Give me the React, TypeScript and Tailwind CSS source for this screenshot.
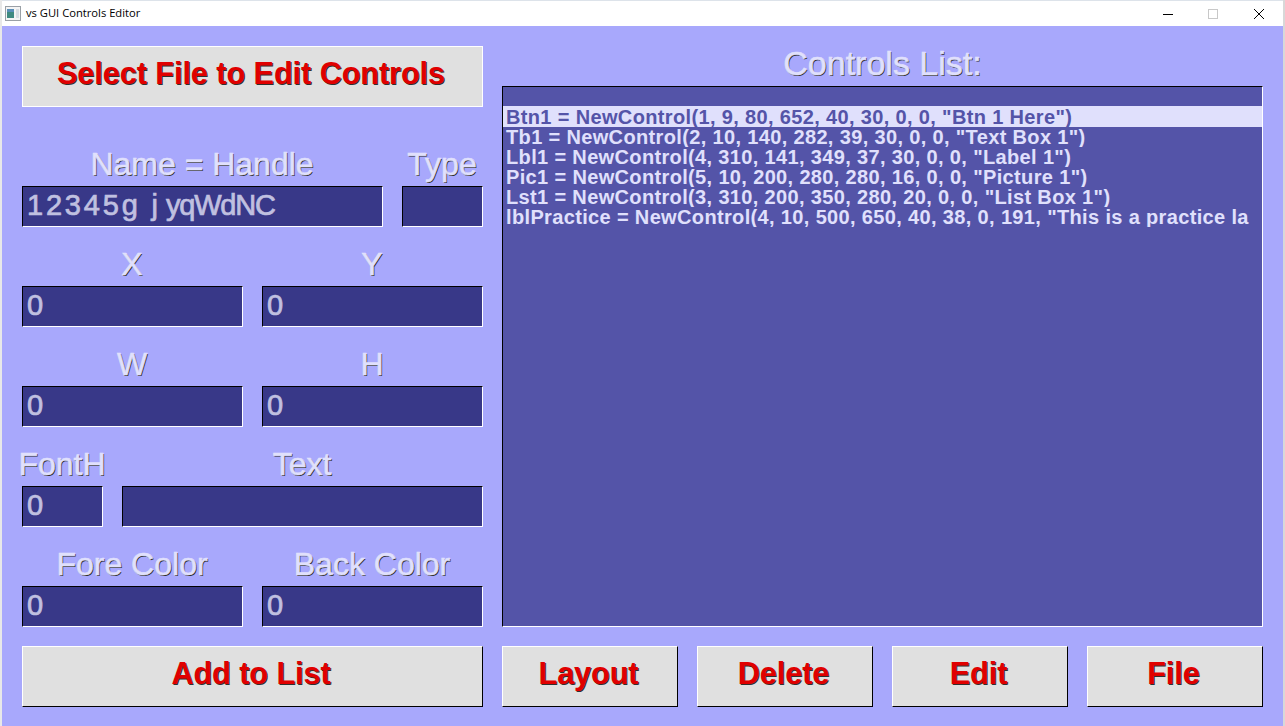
import type { ReactNode } from "react";

const font = "font-['Liberation_Sans',Arial,sans-serif]";

const controls = [
  'Btn1 = NewControl(1, 9, 80, 652, 40, 30, 0, 0, "Btn 1 Here")',
  'Tb1 = NewControl(2, 10, 140, 282, 39, 30, 0, 0, "Text Box 1")',
  'Lbl1 = NewControl(4, 310, 141, 349, 37, 30, 0, 0, "Label 1")',
  'Pic1 = NewControl(5, 10, 200, 280, 280, 16, 0, 0, "Picture 1")',
  'Lst1 = NewControl(3, 310, 200, 350, 280, 20, 0, 0, "List Box 1")',
  'lblPractice = NewControl(4, 10, 500, 650, 40, 38, 0, 191, "This is a practice la',
];

function Field({ label, value, className }: { label: string; value?: ReactNode; className: string }) {
  return (
    <div className={`flex h-full flex-col justify-end ${className}`}>
      <div className="mb-[6px] flex justify-center whitespace-nowrap pr-[1px] text-[32px] leading-[32px] text-[#e0e0fc] [-webkit-text-stroke:0.6px_#e0e0fc] [text-shadow:1px_1px_0_#303030]">
        {label}
      </div>
      <div className="h-[41px] overflow-hidden whitespace-nowrap border border-t-black border-l-black border-r-white border-b-white bg-[#383888] pl-[4px] text-[29px] leading-[36px] text-[#c0c0e0] [-webkit-text-stroke:0.7px_#c0c0e0]">
        {value}
      </div>
    </div>
  );
}

function Btn({ label, className }: { label: string; className: string }) {
  return (
    <div className={`flex h-[61px] items-center justify-center border border-t-white border-l-white border-r-black border-b-black bg-[#e0e0e0] pb-[5px] pr-[3px] text-[30.5px] font-bold text-[#e00000] [text-shadow:1px_1px_0_#303030] ${className}`}>
      {label}
    </div>
  );
}

export default function App() {
  return (
    <div className={`flex h-[726px] w-[1285px] flex-col overflow-hidden border-l-2 border-r-2 border-l-[#e8e8e8] border-r-[#d8d8d8] bg-[#a8a8fc] ${font}`}>
      <div className="flex h-[26px] shrink-0 items-center border-t border-t-[#dde3ea] bg-white pl-[3px]">
        <svg width="16" height="15" viewBox="0 0 16 15" className="mr-[5px]">
          <rect x="0.5" y="0.5" width="15" height="14" fill="#f4f4f4" stroke="#9aa0a6" />
          <rect x="2" y="3" width="7" height="9" fill="#3f8a80" />
          <rect x="2" y="3" width="7" height="3" fill="#5a8fb8" />
          <rect x="11" y="3" width="3" height="9" fill="#d8dde2" />
        </svg>
        <span className="font-['Open_Sans',sans-serif] text-[11.2px] text-black">vs GUI Controls Editor</span>
        <div className="ml-auto flex items-center">
          <svg width="12" height="12" viewBox="0 0 12 12" className="mr-[33px]">
            <path d="M1 6.5H11" stroke="#000" />
          </svg>
          <svg width="12" height="12" viewBox="0 0 12 12" className="mr-[34px]">
            <rect x="1.5" y="1.5" width="9" height="9" fill="none" stroke="#c8c8c8" />
          </svg>
          <svg width="12" height="12" viewBox="0 0 12 12" className="mr-[18px]">
            <path d="M1 1L11 11M11 1L1 11" stroke="#000" />
          </svg>
        </div>
      </div>

      <div className="flex flex-1 gap-[19px] pl-[20px] pt-[20px]">
        <div className="flex w-[461px] flex-col">
          <div className="mb-[20px]">
            <Btn label="Select File to Edit Controls" className="border-r-white border-b-white" />
          </div>
          <div className="flex h-[100px] gap-[19px]">
            <Field label="Name = Handle" className="w-[361px]" value={
              <span>
                <span className="tracking-[2.8px]">12345g </span>
                <span>j </span>
                <span className="tracking-[-1.2px]">yqWdNC</span>
              </span>
            } />
            <Field label="Type" className="w-[81px]" />
          </div>
          <div className="flex h-[100px] gap-[19px]">
            <Field label="X" value="0" className="w-[221px]" />
            <Field label="Y" value="0" className="w-[221px]" />
          </div>
          <div className="flex h-[100px] gap-[19px]">
            <Field label="W" value="0" className="w-[221px]" />
            <Field label="H" value="0" className="w-[221px]" />
          </div>
          <div className="flex h-[100px] gap-[19px]">
            <Field label="FontH" value="0" className="w-[81px]" />
            <Field label="Text" className="w-[361px]" />
          </div>
          <div className="flex h-[100px] gap-[19px]">
            <Field label="Fore Color" value="0" className="w-[221px]" />
            <Field label="Back Color" value="0" className="w-[221px]" />
          </div>
          <div className="mt-[19px]">
            <Btn label="Add to List" className="" />
          </div>
        </div>

        <div className="flex w-[761px] flex-col">
          <div className="flex h-[40px] items-start justify-center text-[34px] leading-[34px] text-[#e0e0fc] [-webkit-text-stroke:0.6px_#e0e0fc] [text-shadow:1px_1px_0_#303030]">
            Controls List:
          </div>
          <div className="h-[541px] overflow-hidden border border-t-black border-l-black border-r-white border-b-white bg-[#5454a8] pt-[19px] text-[20px] font-bold tracking-[0.35px]">
            {controls.map((c, i) => (
              <div
                key={c}
                className={`overflow-hidden whitespace-nowrap pl-[3px] ${i === 0 ? "h-[21px] bg-[#e0e0fc] leading-[22px] text-[#5454a8]" : "h-[20px] leading-[20px] text-[#e0e0fc]"}`}
              >
                {c}
              </div>
            ))}
          </div>
          <div className="mt-[19px] flex gap-[19px]">
            <Btn label="Layout" className="w-[176px]" />
            <Btn label="Delete" className="w-[176px]" />
            <Btn label="Edit" className="w-[176px]" />
            <Btn label="File" className="w-[176px]" />
          </div>
        </div>
      </div>
    </div>
  );
}
